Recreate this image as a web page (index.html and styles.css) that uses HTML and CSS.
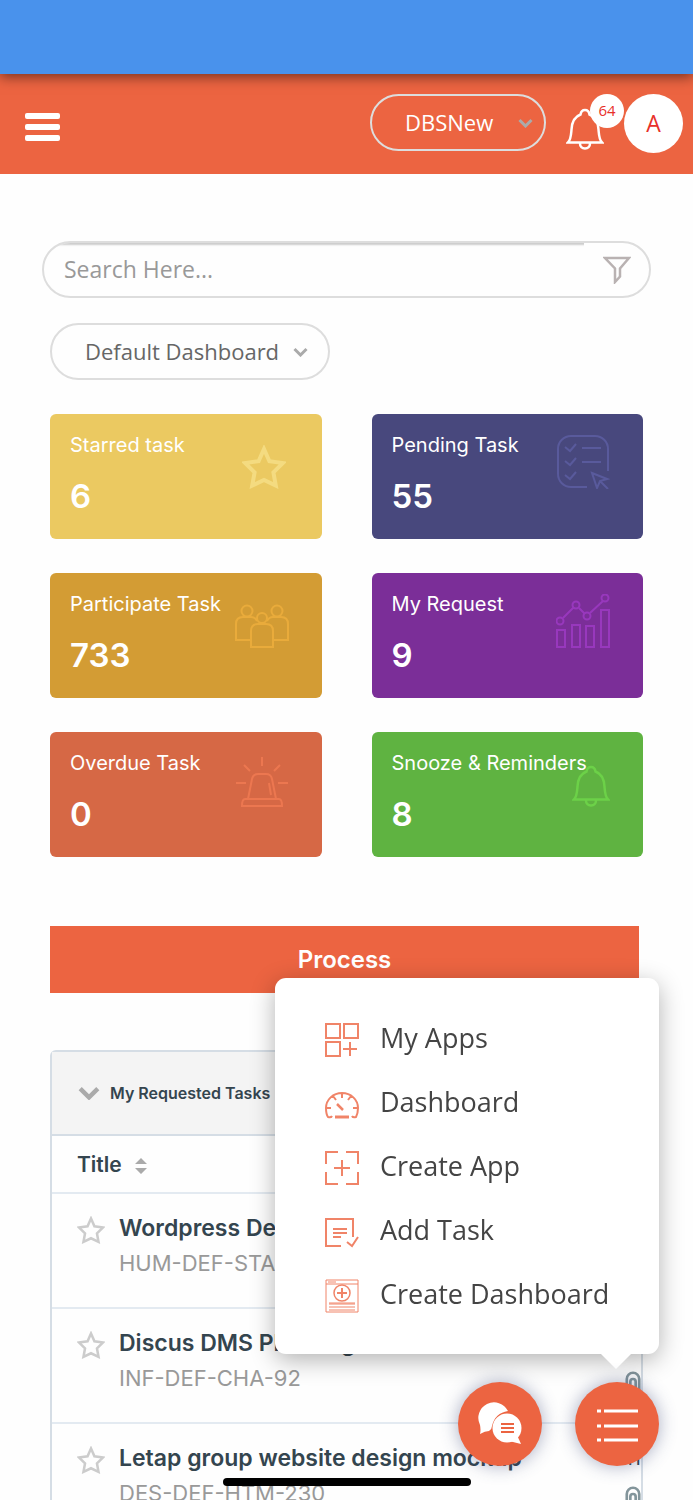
FILE: index.html
```html
<!DOCTYPE html>
<html lang="en">
<head>
    <meta charset="UTF-8">
    <meta name="viewport" content="width=device-width, initial-scale=1.0">
    <title>Dashboard</title>
    <link rel="stylesheet" href="styles.css">
</head>
<body>
    <!-- shared icons -->
    <svg width="0" height="0" class="sprite" aria-hidden="true">
        <symbol id="chevron" viewBox="0 0 20 12">
            <path d="M2 2l8 8 8-8" fill="none" stroke="currentColor" stroke-width="4"/>
        </symbol>
        <symbol id="star" viewBox="0 0 44 44">
            <path d="M22 4l5.400 12.200 13.600 1.800-9.600 9.400 2.400 13.200L22 35l-11.800 5.600 2.400-13.200L3 18l13.600-1.800z" fill="none" stroke="currentColor" stroke-width="4"/>
        </symbol>
        <symbol id="bell" viewBox="0 0 38 42">
            <path d="M2 34.500c3-3 3-7 3.500-13C6 13 9 8.500 14.500 6.500 15 3.500 16.500 2 19 2s4 1.500 4.500 4.500C29 8.500 32 13 32.500 21.500c.5 6 .5 10 3.500 13zM14 35.500c0 3 2 5 5 5s5-2 5-5" fill="none" stroke="currentColor" stroke-width="2.500"/>
        </symbol>
        <symbol id="clip" viewBox="0 0 18 36">
            <path d="M2 28V9a7 7 0 0 1 14 0v18a6 6 0 0 1-9 5M6 26V12a3 3 0 0 1 6 0v14" fill="none" stroke="currentColor" stroke-width="3"/>
        </symbol>
    </svg>

    <div class="app">
        <div class="status-bar"></div>
        <header class="topbar">
            <button class="menu-btn" aria-label="Menu"><span></span><span></span><span></span></button>
            <div class="topbar-right">
                <div class="select-wrap company">
                    <select aria-label="Company">
                        <option>DBSNew</option>
                    </select>
                    <svg class="chevron"><use href="#chevron"/></svg>
                </div>
                <button class="bell-btn" aria-label="Notifications">
                    <svg width="38" height="42"><use href="#bell"/></svg>
                    <span class="badge">64</span>
                </button>
                <button class="avatar">A</button>
            </div>
        </header>

        <main>
            <div class="search">
                <input type="text" placeholder="Search Here..." aria-label="Search">
                <button class="filter-btn" aria-label="Filter">
                    <svg width="28" height="28" viewBox="0 0 28 28"><path d="M2 2h24l-9 10.500v8L12 26V12.500z" fill="none" stroke="#b9b2b2" stroke-width="2.500"/></svg>
                </button>
            </div>

            <div class="content">
                <div class="select-wrap dashboard">
                    <select aria-label="Dashboard">
                        <option>Default Dashboard</option>
                    </select>
                    <svg class="chevron"><use href="#chevron"/></svg>
                </div>

                <div class="cards">
                    <div class="card starred">
                        <p>Starred task</p>
                        <strong>6</strong>
                        <svg class="card-icon small" width="44" height="44"><use href="#star"/></svg>
                    </div>
                    <div class="card pending">
                        <p>Pending Task</p>
                        <strong>55</strong>
                        <svg class="card-icon" width="54" height="54" viewBox="0 0 54 54">
                            <path d="M31 52H15A13 13 0 0 1 2 39V14A13 13 0 0 1 15 1h24a13 13 0 0 1 13 13v22M9 12l5 4 6-7M9 26l5 4 6-7M9 40l5 4 6-7M26 13h19M26 27h19M36 38l15 6-7 2-3 7zM44 46l8 8"/>
                        </svg>
                    </div>
                    <div class="card participate">
                        <p>Participate Task</p>
                        <strong>733</strong>
                        <svg class="card-icon" width="54" height="54" viewBox="0 0 54 54">
                            <circle cx="12" cy="17" r="5.500"/><circle cx="42" cy="17" r="5.500"/><circle cx="27" cy="24" r="5"/>
                            <path d="M15 46H1V30q0-7 7-7h8q4 0 6 4M39 46h14V30q0-7-7-7h-8q-4 0-6 4M16 53V37q0-7 7-7h8q7 0 7 7v16z"/>
                        </svg>
                    </div>
                    <div class="card request">
                        <p>My Request</p>
                        <strong>9</strong>
                        <svg class="card-icon" width="54" height="54" viewBox="0 0 54 54">
                            <circle cx="4" cy="27" r="3.500"/><circle cx="20" cy="11" r="3.500"/><circle cx="31" cy="22" r="3.500"/><circle cx="49" cy="4" r="3.500"/>
                            <path d="M7 24l11-11M23 14l6 6M34 19L47 7M1 36h8v17H1zM16 31h8v22h-8zM30 32h8v21h-8zM45 16h8v37h-8z"/>
                        </svg>
                    </div>
                    <div class="card overdue">
                        <p>Overdue Task</p>
                        <strong>0</strong>
                        <svg class="card-icon" width="54" height="54" viewBox="0 0 54 54">
                            <path d="M13 46l4-20q1-5 6-5h8q5 0 6 5l4 20M10 46h34q3 0 3 7H7q0-7 3-7zM27 4v9M9 12l6 6M45 12l-6 6M1 30h10M43 30h10M34 30l2 12"/>
                        </svg>
                    </div>
                    <div class="card snooze">
                        <p>Snooze &amp; Reminders</p>
                        <strong>8</strong>
                        <svg class="card-icon" width="38" height="42"><use href="#bell"/></svg>
                    </div>
                </div>

                <button class="process">Process</button>

                <section class="panel">
                    <button class="panel-head">
                        <svg class="chevron"><use href="#chevron"/></svg>
                        My Requested Tasks
                    </button>
                    <table>
                        <thead>
                            <tr>
                                <th colspan="2">Title
                                    <svg width="12" height="16" viewBox="0 0 12 16"><path d="M0 6l6-6 6 6zM0 10l6 6 6-6z" fill="#aaa"/></svg>
                                </th>
                            </tr>
                        </thead>
                        <tbody>
                            <tr>
                                <td>
                                    <div class="task">
                                        <svg width="28" height="28"><use href="#star"/></svg>
                                        <div><a href="#">Wordpress Design</a><p>HUM-DEF-STA-94</p></div>
                                    </div>
                                </td>
                                <td class="meta">11<svg width="16" height="32"><use href="#clip"/></svg></td>
                            </tr>
                            <tr>
                                <td>
                                    <div class="task">
                                        <svg width="28" height="28"><use href="#star"/></svg>
                                        <div><a href="#">Discus DMS Planning</a><p>INF-DEF-CHA-92</p></div>
                                    </div>
                                </td>
                                <td class="meta">11<svg width="16" height="32"><use href="#clip"/></svg></td>
                            </tr>
                            <tr>
                                <td>
                                    <div class="task">
                                        <svg width="28" height="28"><use href="#star"/></svg>
                                        <div><a href="#">Letap group website design mockup</a><p>DES-DEF-HTM-230</p></div>
                                    </div>
                                </td>
                                <td class="meta">11<svg width="16" height="32"><use href="#clip"/></svg></td>
                            </tr>
                        </tbody>
                    </table>
                </section>
            </div>
        </main>
    </div>

    <nav class="popup">
        <a href="#">
            <svg width="34" height="34" viewBox="0 0 34 34"><path d="M1 1h14v14H1zM19 1h14v14H19zM1 19h14v14H1zM18 26h14M25 19v14"/></svg>
            My Apps
        </a>
        <a href="#">
            <svg width="34" height="34" viewBox="0 0 34 34"><path d="M7 29q-1 2-4 1Q1 27 1 21a16 15 0 0 1 32 0q0 5-2 9-3 1-4-1M17 6v5M8 9l3 4M26 9l-3 4M1 21h5M33 21h-5"/><path d="M12 17l6 6" stroke-width="2.500"/><path d="M10 30h14" stroke-width="3"/></svg>
            Dashboard
        </a>
        <a href="#">
            <svg width="34" height="34" viewBox="0 0 34 34"><path d="M1 13V1h12M21 1h12v12M33 21v12H21M13 33H1V21M9 17h16M17 9v16"/></svg>
            Create App
        </a>
        <a href="#">
            <svg width="34" height="34" viewBox="0 0 34 34"><path d="M28 22V4H1v27h15M8 14h14M8 18h14M8 22h8M22 27l5 4 6-9"/></svg>
            Add Task
        </a>
        <a href="#">
            <svg width="34" height="34" viewBox="0 0 34 34"><g stroke-width="1"><path d="M1 1h32v32H1zM1 5h32M3 3h8M4 25h26M4 28h26M4 31h26M4 24h26"/><circle cx="17" cy="14" r="8" stroke-width="1.500"/></g><path d="M12 14h10M17 9v10"/></svg>
            Create Dashboard
        </a>
    </nav>

    <div class="fabs">
        <button class="fab" aria-label="Chat">
            <svg width="46" height="46" viewBox="0 0 46 46">
                <path d="M3 33q1-4 0-9A15 15 0 1 1 31 10Q18 12 15 25q0 3-3 5-4 0-9 3z" fill="#fff"/>
                <circle cx="30" cy="27" r="14.500" fill="#fff"/>
                <path d="M40 34l4 9-12-3z" fill="#fff"/>
                <path d="M24 23h13M24 27h13M24 31h13" stroke="#ec6441" stroke-width="2"/>
            </svg>
        </button>
        <button class="fab" aria-label="Shortcuts">
            <svg width="42" height="36" viewBox="0 0 42 36"><path d="M1 5h4M8 5h34M1 20h4M8 20h34M1 34h4M8 34h34" stroke="#fff" stroke-width="3"/></svg>
        </button>
    </div>
    <div class="home-indicator"></div>
</body>
</html>
```
FILE: styles.css
```css
* {
    box-sizing: border-box;
}

body {
    margin: 0;
    font-family: Inter, sans-serif;
    background: #fefefe;
    color: #34454f;
}

p {
    margin: 0;
}

a {
    color: inherit;
    text-decoration: none;
}

button {
    font: inherit;
    border: none;
    background: none;
    padding: 0;
    cursor: pointer;
}

svg {
    flex: none;
}

.sprite {
    position: absolute;
}

.app {
    height: 100vh;
    overflow: hidden;
}

/* top */
.status-bar {
    height: 74px;
    background: #4992ec;
    box-shadow: 0 3px 12px rgba(0, 0, 0, 0.5);
    position: relative;
    z-index: 1;
}

.topbar {
    height: 100px;
    padding: 20px 10px 0 25px;
    background: #ec6441;
    display: flex;
    justify-content: space-between;
    font-family: "Open Sans", sans-serif;
}

.menu-btn {
    display: flex;
    flex-direction: column;
    gap: 5px;
    width: 35px;
    margin-top: 19px;
}

.menu-btn span {
    width: 100%;
    height: 6px;
    border-radius: 2px;
    background: #fff;
}

.topbar-right {
    display: flex;
    align-items: flex-start;
}

.select-wrap {
    position: relative;
    font-family: "Open Sans", sans-serif;
}

.select-wrap select {
    appearance: none;
    width: 100%;
    height: 57px;
    padding: 0 33px 2px;
    border: 2px solid #ddd;
    border-radius: 30px;
    background: transparent;
    font: inherit;
    font-size: 22px;
    color: inherit;
}

.select-wrap .chevron {
    position: absolute;
    right: 13px;
    top: 24px;
    pointer-events: none;
}

.chevron {
    width: 15px;
    height: 10px;
    color: #aaa;
}

.company {
    width: 176px;
    color: #fff;
}

.bell-btn {
    position: relative;
    width: 78px;
    height: 59px;
    padding: 14px 0 0 20px;
    text-align: left;
    color: #fff;
}

.badge {
    position: absolute;
    top: 0;
    right: 0;
    width: 34px;
    height: 34px;
    border-radius: 50%;
    background: #fff;
    color: #e8302a;
    font-size: 15px;
    line-height: 32px;
    text-align: center;
}

.avatar {
    width: 59px;
    height: 59px;
    padding-bottom: 2px;
    border-radius: 50%;
    background: #fff;
    color: #e8302a;
    font-size: 23px;
}

/* search */
main {
    padding: 67px 42px 0;
}

.search {
    display: flex;
    height: 57px;
    border: 2px solid #ddd;
    border-radius: 30px;
    overflow: hidden;
}

.search input {
    flex: 1;
    min-width: 0;
    padding: 0 20px 2px;
    border: none;
    outline: none;
    background: transparent;
    box-shadow: inset 0 5px 2px -3px #ccc;
    font-family: "Open Sans", sans-serif;
    font-size: 23px;
}

.search input::placeholder {
    color: #999;
}

.filter-btn {
    width: 65px;
    padding-top: 5px;
}

.content {
    padding: 25px 8px 0;
}

.dashboard {
    width: 280px;
    color: #666;
}

.dashboard .chevron {
    right: 22px;
}

/* cards */
.cards {
    display: grid;
    grid-template-columns: 1fr 1fr;
    gap: 34px 50px;
    margin-top: 34px;
}

.card {
    position: relative;
    height: 125px;
    padding: 18px 20px;
    border-radius: 6px;
    color: #fff;
}

.card p {
    font-size: 20px;
    line-height: 26px;
}

.card strong {
    display: block;
    margin-top: 18px;
    font-size: 33px;
    font-weight: 600;
    line-height: 40px;
}

.card-icon {
    position: absolute;
    right: 33px;
    bottom: 50px;
    fill: none;
    stroke: currentColor;
    stroke-width: 2;
}

.card-icon.small {
    right: 36px;
}

.starred { background: #ebc961; }
.pending { background: #48487d; }
.participate { background: #d39c34; }
.request { background: #7b2e98; }
.overdue { background: #d66845; }
.snooze { background: #5fb341; }

.starred .card-icon { color: #f4db80; }
.pending .card-icon { color: #595a9c; }
.participate .card-icon { color: #e9ab3b; }
.request .card-icon { color: #9838bd; }
.overdue .card-icon { color: #ec7750; }
.snooze .card-icon { color: #6cd148; }

.process {
    display: block;
    width: calc(100% - 4px);
    height: 67px;
    margin-top: 69px;
    background: #ec6441;
    color: #fff;
    font-size: 24px;
    font-weight: 600;
}

/* task list */
.panel {
    margin-top: 57px;
    border: 2px solid #d5dde5;
    border-radius: 6px;
}

.panel-head {
    display: flex;
    align-items: center;
    gap: 10px;
    width: 100%;
    height: 84px;
    padding-left: 26px;
    border-bottom: 2px solid #d5dde5;
    background: #f4f4f4;
    color: #34454f;
    font-size: 16px;
    font-weight: 600;
}

.panel-head .chevron {
    width: 22px;
    height: 14px;
}

table {
    width: 100%;
    border-collapse: collapse;
}

th {
    height: 57px;
    padding: 0 25px;
    text-align: left;
    font-size: 21px;
    font-weight: 600;
}

th svg {
    margin-left: 8px;
    vertical-align: -2px;
}

td {
    height: 115px;
    padding: 17px 0 0;
    border-top: 2px solid #e3eaf1;
    vertical-align: top;
}

.task {
    display: flex;
    gap: 14px;
    padding-left: 25px;
    line-height: 35px;
    font-size: 22px;
    white-space: nowrap;
}

.task svg {
    margin-top: 5px;
    color: #ccc;
}

.task a {
    font-size: 23px;
    font-weight: 600;
}

.task p {
    color: #999;
}

.meta {
    width: 40px;
    text-align: right;
    font-size: 20px;
    line-height: 35px;
}

.meta svg {
    display: block;
    margin: 10px 0 0 auto;
    color: #83959b;
}

/* shortcuts menu */
.popup {
    position: fixed;
    right: 34px;
    bottom: 146px;
    width: 384px;
    padding: 27px 0 29px 50px;
    border-radius: 11px;
    background: #fff;
    box-shadow: 0 6px 24px rgba(0, 0, 0, 0.3);
    font-family: "Open Sans", sans-serif;
    font-size: 27px;
    color: #444;
}

.popup::after {
    content: "";
    position: absolute;
    right: 27px;
    bottom: -15px;
    border: 16px solid transparent;
    border-top-color: #fff;
    border-bottom: none;
}

.popup a {
    display: flex;
    align-items: center;
    gap: 21px;
    height: 64px;
}

.popup svg {
    margin-top: 5px;
    fill: none;
    stroke: #f08468;
    stroke-width: 2;
}

.fabs {
    position: fixed;
    right: 34px;
    bottom: 34px;
    display: flex;
    gap: 33px;
}

.fab {
    display: flex;
    align-items: center;
    justify-content: center;
    width: 84px;
    height: 84px;
    border-radius: 50%;
    background: #ec6441;
    box-shadow: 0 0 18px rgba(60, 70, 120, 0.45);
}

.home-indicator {
    position: fixed;
    left: 50%;
    bottom: 14px;
    width: 248px;
    height: 8px;
    margin-left: -124px;
    border-radius: 4px;
    background: #000;
}
```
